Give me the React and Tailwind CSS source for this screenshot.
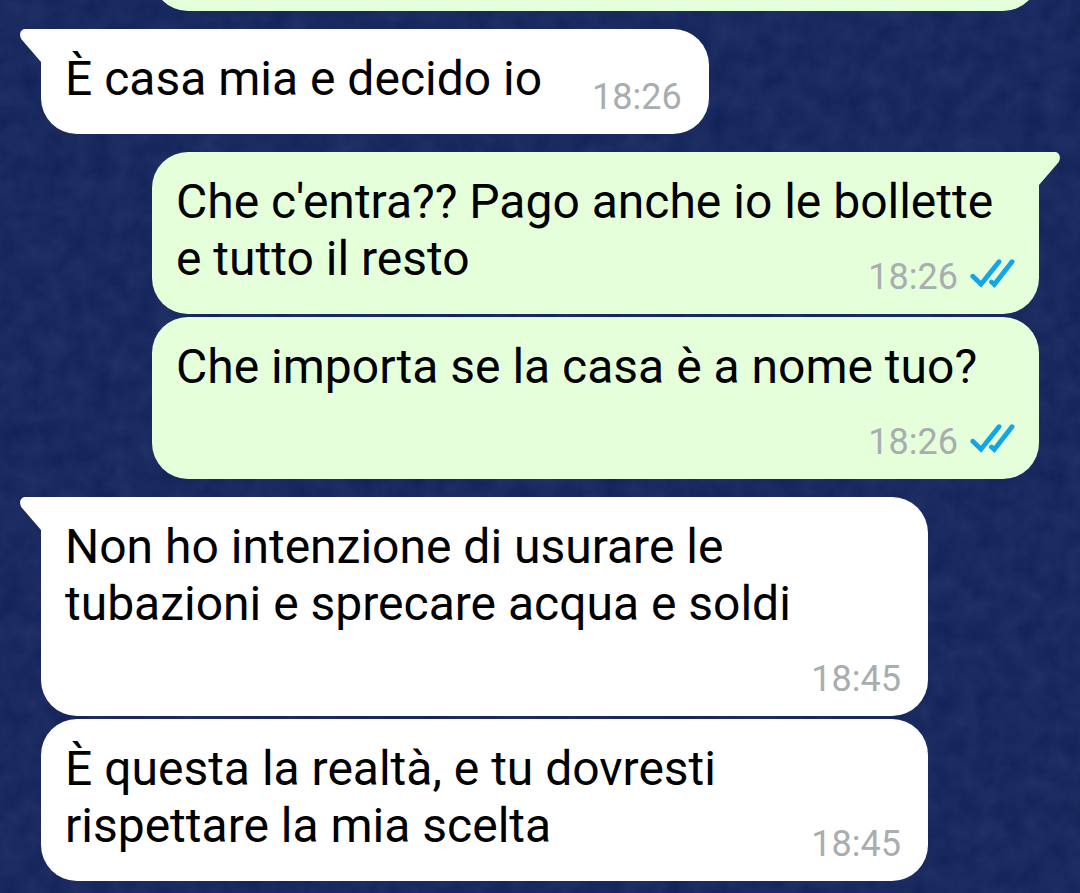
const groups = [
  {
    outgoing: false,
    messages: [{ text: "È casa mia e decido io", time: "18:26" }],
  },
  {
    outgoing: true,
    messages: [
      { text: "Che c'entra?? Pago anche io le bollette e tutto il resto", time: "18:26" },
      { text: "Che importa se la casa è a nome tuo?", time: "18:26" },
    ],
  },
  {
    outgoing: false,
    messages: [
      { text: "Non ho intenzione di usurare le tubazioni e sprecare acqua e soldi", time: "18:45" },
      { text: "È questa la realtà, e tu dovresti rispettare la mia scelta", time: "18:45" },
    ],
  },
];

function Wallpaper() {
  return (
    <svg className="absolute inset-0 h-full w-full" aria-hidden="true">
      <filter id="felt" x="0" y="0" width="100%" height="100%" colorInterpolationFilters="sRGB">
        <feTurbulence type="fractalNoise" baseFrequency="0.045" numOctaves="3" seed="8" />
        <feColorMatrix
          type="matrix"
          values="0.07 0 0 0 0.065
                  0.07 0 0 0 0.13
                  0.07 0 0 0 0.34
                  0 0 0 0 1"
        />
      </filter>
      <rect width="100%" height="100%" filter="url(#felt)" />
    </svg>
  );
}

function Tail({ outgoing }) {
  return (
    <svg
      width="21"
      height="34"
      viewBox="0 0 21 34"
      className={outgoing ? "shrink-0 -scale-x-100 text-[#e5ffdb]" : "shrink-0 text-white"}
      aria-hidden="true"
    >
      <path d="M21 0H5C1 0-1.300 5 1 9.500Q1.500 10.500 2.500 11.500L21 33Z" fill="currentColor" />
    </svg>
  );
}

function ReadTicks() {
  return (
    <svg width="46" height="31" viewBox="0 1 46 31" fill="none" stroke="#12a5e8" strokeWidth="4.800" role="img" aria-label="Letto">
      <path d="M3.800 18.300L12 26.300L30 3.700" strokeLinecap="round" />
      <path d="M22.500 24L25.300 26.500L43 3.700" strokeLinecap="round" />
    </svg>
  );
}

function Message({ text, time, outgoing, first }) {
  const shape = first
    ? outgoing
      ? "rounded-[36px] rounded-tr-none"
      : "rounded-[36px] rounded-tl-none"
    : "rounded-[36px]";
  return (
    <li className={outgoing ? "flex flex-row-reverse pl-[132px]" : "flex pr-[132px]"}>
      {first ? <Tail outgoing={outgoing} /> : <span className="w-[21px] shrink-0" />}
      <p
        className={`flow-root px-6 pt-[21px] pb-[19px] text-[48px] leading-[57px] text-black ${shape} ${
          outgoing ? "bg-[#e5ffdb]" : "bg-white"
        }`}
      >
        {text}
        <span className="float-right mt-[29px] ml-[50px] flex items-start gap-[11px] text-[36px] leading-[36px] text-[#a8adaf]">
          <time className={outgoing ? "" : "pr-[3px]"}>{time}</time>
          {outgoing && <ReadTicks />}
        </span>
      </p>
    </li>
  );
}

export default function App() {
  return (
    <main className="relative min-h-screen overflow-hidden bg-[#1a2b60] font-[Roboto,sans-serif]">
      <Wallpaper />
      <div className="relative flex flex-col gap-[18px] px-5">
        <div className="flex h-[11px] items-end overflow-hidden pr-[21px] pl-[132px]">
          <div className="h-20 w-full shrink-0 rounded-[36px] bg-[#e5ffdb]" />
        </div>
        {groups.map((group, g) => (
          <ul key={g} className="flex flex-col gap-[3px]">
            {group.messages.map((message, i) => (
              <Message key={i} {...message} outgoing={group.outgoing} first={i === 0} />
            ))}
          </ul>
        ))}
      </div>
    </main>
  );
}
